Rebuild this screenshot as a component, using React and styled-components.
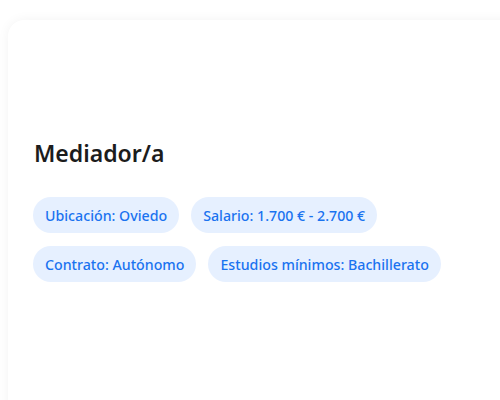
import React from 'react'
import styled, { createGlobalStyle } from 'styled-components'

const GlobalStyle = createGlobalStyle`
  body {
    margin: 0;
    background: #ffffff;
    font-family: "Noto Sans", "Open Sans", sans-serif;
  }
`

const Page = styled.div`
  padding: 20px 0 0 8px;
  height: 400px;
  box-sizing: border-box;
  overflow: hidden;
`

const Card = styled.div`
  background: #ffffff;
  border-radius: 16px 0 0 0;
  box-shadow: 0 0 12px rgba(0, 0, 0, 0.05);
  padding: 118px 25px 40px 25px;
  min-height: 420px;
  margin-right: -20px;
`

const Title = styled.h2`
  margin: 0 0 29px 1px;
  font-size: 23px;
  font-weight: 600;
  color: #1c1c1c;
  line-height: 30px;
`

const Tags = styled.div`
  display: flex;
  flex-wrap: wrap;
  gap: 13px 12px;
  max-width: 420px;
`

const Tag = styled.span`
  display: inline-flex;
  align-items: center;
  height: 36px;
  padding: 0 12px;
  border-radius: 18px;
  background: #e6f0ff;
  color: #1a73f0;
  font-size: 14.2px;
  font-weight: 500;
  white-space: nowrap;
`

const tags = [
  'Ubicación: Oviedo',
  'Salario: 1.700 € - 2.700 €',
  'Contrato: Autónomo',
  'Estudios mínimos: Bachillerato',
]

export default function App() {
  return (
    <>
      <GlobalStyle />
      <Page>
        <Card>
          <Title>Mediador/a</Title>
          <Tags>
            {tags.map((t) => (
              <Tag key={t}>{t}</Tag>
            ))}
          </Tags>
        </Card>
      </Page>
    </>
  )
}
